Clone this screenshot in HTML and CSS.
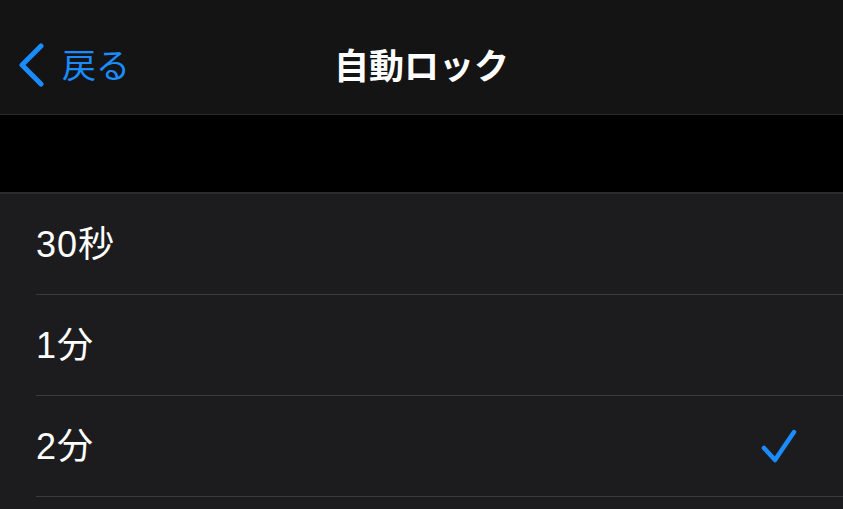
FILE: index.html
```html
<!DOCTYPE html>
<html lang="ja">
<head>
    <meta charset="UTF-8">
    <meta name="viewport" content="width=device-width, initial-scale=1.0">
    <title>自動ロック</title>
    <link rel="stylesheet" href="styles.css">
</head>
<body>
    <header class="nav-bar">
        <a class="back" href="#">
            <svg class="back-icon" width="28" height="44" viewBox="0 0 28 44">
                <path d="M23 3 L4 22 L23 41" fill="none" stroke="currentColor" stroke-width="5" stroke-linecap="round" stroke-linejoin="round"/>
            </svg>
            <span>戻る</span>
        </a>
        <h1 class="nav-title">自動ロック</h1>
    </header>
    <div class="group-gap"></div>
    <ul class="option-list">
        <li class="option"><span class="option-label">30秒</span></li>
        <li class="option"><span class="option-label">1分</span></li>
        <li class="option selected">
            <span class="option-label">2分</span>
            <svg class="check" width="40" height="40" viewBox="0 0 40 40">
                <path d="M5 22 L16 34 L35 6" fill="none" stroke="currentColor" stroke-width="4.5" stroke-linecap="round" stroke-linejoin="round"/>
            </svg>
        </li>
    </ul>
</body>
</html>
```

FILE: styles.css
```css
body {
    font-family: "Noto Sans CJK JP", "Noto Sans", sans-serif;
    margin: 0;
    background-color: #000;
    color: #fff;
    overflow: hidden;
}
.nav-bar {
    position: relative;
    height: 114px;
    background-color: #141414;
    border-bottom: 1px solid #2c2c2e;
    display: flex;
    align-items: center;
    justify-content: center;
}
.back {
    position: absolute;
    left: 18px;
    top: 43px;
    display: flex;
    align-items: center;
    gap: 16px;
    color: #1a8cff;
    text-decoration: none;
    font-size: 34px;
    line-height: 44px;
}
.back span {
    margin-top: -2px;
}
.nav-title {
    margin: 0;
    font-size: 35px;
    font-weight: bold;
    margin-top: 12px;
    margin-left: 0;
}
.group-gap {
    height: 77px;
    background-color: #000;
}
.option-list {
    list-style: none;
    margin: 0;
    padding: 0 0 0 36px;
    background-color: #1c1c1e;
    border-top: 2px solid #2c2c2e;
    min-height: 320px;
}
.option {
    height: 100px;
    border-bottom: 1px solid #3a3a3c;
    display: flex;
    align-items: center;
    justify-content: space-between;
    padding-right: 44px;
}
.option-label {
    font-family: "Liberation Sans", "Noto Sans CJK JP", sans-serif;
    font-size: 36px;
    letter-spacing: 1px;
    line-height: 1;
    margin-top: 2px;
}
.check {
    color: #1a8cff;
}
```
